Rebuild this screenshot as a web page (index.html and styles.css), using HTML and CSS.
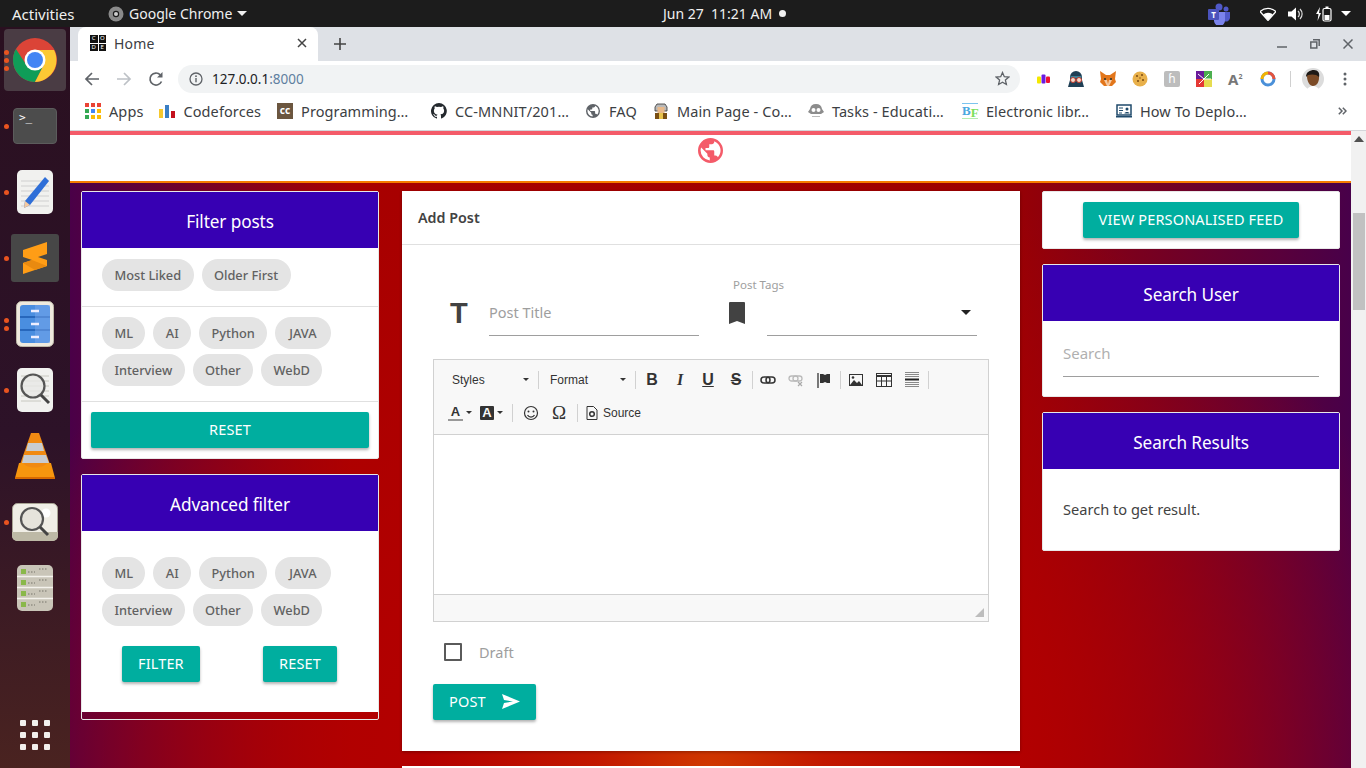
FILE: index.html
```html
<!DOCTYPE html>
<html lang="en">
<head>
  <meta charset="UTF-8">
  <title>Home</title>
  <link rel="stylesheet" href="styles.css">
</head>
<body>

  <!-- Ubuntu top bar -->
  <div class="topbar">
    <div class="top-left">
      <span class="activities">Activities</span>
      <span class="app-menu">
        <svg width="16" height="16" viewBox="0 0 16 16"><circle cx="8" cy="8" r="7.5" fill="#8a8a8a"/><circle cx="8" cy="8" r="3.2" fill="#1c1c1c"/><circle cx="8" cy="8" r="2" fill="#cfcfcf"/></svg>
        Google Chrome
        <i class="caret"></i>
      </span>
    </div>
    <div class="clock">Jun 27&nbsp; 11:21 AM <i class="clock-dot"></i></div>
    <div class="tray">
      <svg class="tray-teams" width="24" height="22" viewBox="0 0 24 22"><circle cx="12" cy="4" r="3.5" fill="#5059c9"/><circle cx="19" cy="6" r="2.5" fill="#5059c9"/><path d="M14 9h9v6a4 4 0 0 1-6 3z" fill="#5059c9"/><path d="M7 9h11v8a5 5 0 0 1-11 1z" fill="#7b83eb"/><rect x="1" y="6" width="11" height="11" rx="1" fill="#4b53bc"/><text x="6.5" y="15" class="teams-t">T</text></svg>
      <svg width="16" height="14" viewBox="0 0 16 14"><path d="M0 4.5a12 12 0 0 1 16 0L8 13.5z" fill="none" stroke="#fff" stroke-width="1.3"/><path d="M3.2 7.5a7.5 7.5 0 0 1 9.6 0L8 13z" fill="#fff"/></svg>
      <svg width="16" height="14" viewBox="0 0 16 14"><path d="M0 4.5h3.5L8 .5v13l-4.500-4H0z" fill="#fff"/><path d="M10 4a4 4 0 0 1 0 6M12 2a7 7 0 0 1 0 10" fill="none" stroke="#ddd" stroke-width="1.200"/></svg>
      <svg width="16" height="16" viewBox="0 0 16 16"><path d="M4 1 0 8h2.500L1.500 15 5 7H3z" fill="#fff"/><rect x="7" y="2.500" width="8" height="12.500" rx="1.500" fill="none" stroke="#fff" stroke-width="1.200"/><rect x="9.500" y="0.500" width="3" height="2" fill="#fff"/><rect x="8.500" y="9" width="5" height="5" fill="#fff"/></svg>
      <i class="caret tray-caret"></i>
    </div>
  </div>

  <div class="desktop">

    <!-- Launcher -->
    <nav class="dock">
      <div class="dock-item dock-active">
        <span class="pips"><i></i><i></i><i></i></span>
        <svg width="46" height="46" viewBox="0 0 46 46">
          <circle cx="23" cy="23" r="22" fill="#db4437"/>
          <path d="M3.950 12 14.300 28H31.700L23 45A22 22 0 0 1 3.950 12z" fill="#0f9d58"/>
          <path d="M23 13H42.050A22 22 0 0 1 23 45L31.700 28z" fill="#fcc934"/>
          <circle cx="23" cy="23" r="10.500" fill="#fff"/>
          <circle cx="23" cy="23" r="8" fill="#4285f4"/>
        </svg>
      </div>
      <div class="dock-item">
        <span class="pips"><i></i></span>
        <div class="term-icon">&gt;_</div>
      </div>
      <div class="dock-item">
        <span class="pips"><i></i></span>
        <svg width="38" height="46" viewBox="0 0 38 46">
          <rect x="1" y="1" width="36" height="44" rx="5" fill="#f1f1ef"/>
          <path d="M5 12h28M5 17h28M5 22h28M5 27h28M5 32h28M5 37h28" stroke="#cfcfcf"/>
          <path d="M29 8 33 12 14 36 8 39 9 32z" fill="#2f6fd8"/>
          <path d="M9 32 14 36 8 39z" fill="#f4c9a0"/>
        </svg>
      </div>
      <div class="dock-item dock-square">
        <span class="pips"><i></i></span>
        <svg width="48" height="48" viewBox="0 0 48 48">
          <rect width="48" height="48" rx="3" fill="#474747"/>
          <path d="M12 16 36 8V20L27 23 36 26V32L12 40V29L21 26 12 23z" fill="#ff9d16"/>
          <path d="M12 29 21 26 36 32 24 36z" fill="#e98a10"/>
        </svg>
      </div>
      <div class="dock-item">
        <span class="pips"><i></i><i></i></span>
        <svg width="38" height="46" viewBox="0 0 38 46">
          <rect x="0.500" y="0.500" width="37" height="45" rx="5" fill="#efeade" stroke="#bdb8a8"/>
          <rect x="4" y="4" width="30" height="38" rx="3" fill="#4a8ee0"/>
          <path d="M4 16h30M4 29h30" stroke="#1d5bb0" stroke-width="1.500"/>
          <path d="M19 4h15v38H19z" fill="#7aa8ec" opacity=".5"/>
          <path d="M15 10h8M15 23h8M15 36h8" stroke="#eef" stroke-width="2.500"/>
        </svg>
      </div>
      <div class="dock-item">
        <span class="pips"><i></i></span>
        <svg width="38" height="46" viewBox="0 0 38 46">
          <rect x="1" y="1" width="36" height="44" rx="5" fill="#f1f1ef"/>
          <path d="M5 9h28M5 14h28M5 19h28M5 24h28M5 29h28M5 34h20" stroke="#c8c8c0"/>
          <circle cx="17" cy="19" r="11.500" fill="#e9e9e6" fill-opacity=".8" stroke="#555" stroke-width="2.200"/>
          <path d="M25 28 33 36" stroke="#444" stroke-width="3"/>
        </svg>
      </div>
      <div class="dock-item">
        <svg width="42" height="46" viewBox="0 0 42 46">
          <path d="M17 0h8l13 37H4z" fill="#f08a12"/>
          <path d="M14 10h14l2 8H12zM10 22h22l3 8H8z" fill="#c8ccd0"/>
          <path d="M5 30h4c4 6 20 6 24 0h4l4 15H1z" fill="#f7960e"/>
          <path d="M1 44h40v2H1z" fill="#d96a00"/>
        </svg>
      </div>
      <div class="dock-item">
        <span class="pips"><i></i></span>
        <svg width="46" height="38" viewBox="0 0 46 38">
          <rect x="0.500" y="0.500" width="45" height="37" rx="5" fill="#f0eee6" stroke="#a8a494"/>
          <path d="M0 29h46v4a5 5 0 0 1-5 5H5a5 5 0 0 1-5-5z" fill="#bdb9a6"/>
          <circle cx="34" cy="10" r="4.500" fill="#fff"/>
          <circle cx="20" cy="16" r="11" fill="#e6e4dc" stroke="#555" stroke-width="2.200"/>
          <path d="M28 24 36 32" stroke="#444" stroke-width="3"/>
        </svg>
      </div>
      <div class="dock-item">
        <svg width="36" height="46" viewBox="0 0 36 46">
          <rect width="36" height="46" rx="5" fill="#c9c5b8"/>
          <path d="M0 11.500h36M0 22.500h36M0 33.500h36" stroke="#f4f2ec" stroke-width="1.500"/>
          <path d="M4 4h5v5H4zM4 15h5v5H4zM4 26h5v5H4zM4 37h5v5H4z" fill="#8ab84a"/>
          <path d="M11 7h7M11 18h7M11 29h7M11 40h7M22 4h9M22 15h9M22 26h9M22 37h9" stroke="#77746a" stroke-dasharray="1.500 1.500"/>
        </svg>
      </div>
      <div class="dock-spacer"></div>
      <div class="app-grid">
        <i></i><i></i><i></i><i></i><i></i><i></i><i></i><i></i><i></i>
      </div>
    </nav>

    <div class="browser">

      <!-- Tab strip -->
      <div class="tabstrip">
        <div class="tab">
          <span class="tab-favicon"><b>C</b><b>O</b><b>D</b><b>E</b></span>
          <span class="tab-title">Home</span>
          <svg class="tab-x" width="10" height="10" viewBox="0 0 10 10"><path d="M1 1l8 8M9 1l-8 8" stroke="#444" stroke-width="1.500"/></svg>
        </div>
        <svg class="new-tab" width="12" height="12" viewBox="0 0 12 12"><path d="M6 0v12M0 6h12" stroke="#444" stroke-width="1.600"/></svg>
        <div class="window-btns">
          <svg width="10" height="10" viewBox="0 0 10 10"><path d="M0 8h10" stroke="#5f6368" stroke-width="1.500"/></svg>
          <svg width="10" height="10" viewBox="0 0 10 10"><path d="M3 .8h6.200V7M.8 3h6v6h-6z" fill="none" stroke="#5f6368" stroke-width="1.500"/></svg>
          <svg width="10" height="10" viewBox="0 0 10 10"><path d="M.5.5l9 9M9.500.5l-9 9" stroke="#5f6368" stroke-width="1.500"/></svg>
        </div>
      </div>

      <!-- Toolbar -->
      <div class="toolbar">
        <svg class="nav-ico" width="16" height="16" viewBox="0 0 16 16"><path d="M15 8H2M8 2 2 8l6 6" fill="none" stroke="#5f6368" stroke-width="1.700"/></svg>
        <svg class="nav-ico" width="16" height="16" viewBox="0 0 16 16"><path d="M1 8h13M8 2l6 6-6 6" fill="none" stroke="#bdc1c6" stroke-width="1.700"/></svg>
        <svg class="nav-ico" width="16" height="16" viewBox="0 0 16 16"><path d="M13.500 10.500A6 6 0 1 1 12.300 3.800" fill="none" stroke="#5f6368" stroke-width="1.700"/><path d="M14.500 1v5.500H9z" fill="#5f6368"/></svg>
        <div class="omnibox">
          <svg width="14" height="14" viewBox="0 0 14 14"><circle cx="7" cy="7" r="6" fill="none" stroke="#5f6368" stroke-width="1.300"/><path d="M7 6v4.200" stroke="#5f6368" stroke-width="1.400"/><circle cx="7" cy="4.200" r=".9" fill="#5f6368"/></svg>
          <span class="url">127.0.0.1<span class="url-port">:8000</span></span>
          <svg class="star" width="15" height="15" viewBox="0 0 15 15"><path d="M7.500 1.500 9.300 5.700l4.500.4-3.400 3 1 4.400-3.900-2.300-3.900 2.300 1-4.400-3.400-3 4.500-.4z" fill="none" stroke="#5f6368" stroke-width="1.300"/></svg>
        </div>
        <div class="extensions">
          <svg width="16" height="16" viewBox="0 0 16 16"><rect x="1" y="5.500" width="4" height="7" rx="1" fill="#f4e800"/><rect x="5.500" y="3.500" width="4" height="9" rx="1" fill="#6a1be0"/><rect x="10" y="5.500" width="4" height="6.500" rx="1" fill="#f01030"/></svg>
          <svg width="16" height="16" viewBox="0 0 16 16"><path d="M8 0a6 6 0 0 1 6 6v3l2 7H0l2-7V6a6 6 0 0 1 6-6z" fill="#1f3f55"/><path d="M2.500 5h11v2h-11z" fill="#3d7f96"/><circle cx="5" cy="9" r="2.500" fill="#f3d9c9" stroke="#c0392b"/><circle cx="11" cy="9" r="2.500" fill="#f3d9c9" stroke="#c0392b"/></svg>
          <svg width="16" height="16" viewBox="0 0 16 16"><path d="M0 0l6 4h4l6-4-1 8 1 3-4 4H4l-4-4 1-3z" fill="#e2761b"/><path d="M4 9h3l1 4 1-4h3l-3 6H7z" fill="#f6c9a0"/><circle cx="5" cy="8" r="1" fill="#233"/><circle cx="11" cy="8" r="1" fill="#233"/></svg>
          <svg width="16" height="16" viewBox="0 0 16 16"><circle cx="8" cy="8" r="7.500" fill="#e8b04a"/><g fill="#7a4a12"><circle cx="5" cy="5" r="1"/><circle cx="10" cy="4" r="1"/><circle cx="11" cy="9" r="1"/><circle cx="6" cy="10" r="1"/><circle cx="8" cy="7" r=".7"/></g></svg>
          <span class="ext-h">ɦ</span>
          <svg width="16" height="16" viewBox="0 0 16 16"><rect width="8" height="8" fill="#6a1b9a"/><rect x="8" width="8" height="8" fill="#4caf50"/><rect y="8" width="8" height="8" fill="#e53935"/><rect x="8" y="8" width="8" height="8" fill="#e6dc50"/><path d="M8 8 2 3M8 8l5-5M8 8l-5 5M8 8h7" stroke="#fff"/></svg>
          <span class="ext-a">A<sup>2</sup></span>
          <svg width="16" height="16" viewBox="0 0 16 16"><circle cx="8" cy="8" r="6" fill="none" stroke="#4a90d9" stroke-width="3"/><path d="M8 2a6 6 0 0 1 6 6" fill="none" stroke="#e5533d" stroke-width="3"/><path d="M2 8a6 6 0 0 1 6-6" fill="none" stroke="#f4b400" stroke-width="3"/></svg>
        </div>
        <div class="toolbar-sep"></div>
        <svg class="avatar" width="22" height="22" viewBox="0 0 22 22"><circle cx="11" cy="11" r="11" fill="#dcdcdc"/><path d="M5 8c0-4 3-5 6-5s7 1 6 7c0 5-3 8-6 8s-6-4-6-10z" fill="#7b4a26"/><path d="M4 9c0-5 4-7 8-7s6 3 5 7c-2-3-8-3-11-2z" fill="#1e1a17"/><path d="M5 22c1-3 4-4 6-4s5 1 6 4z" fill="#fff"/></svg>
        <svg class="kebab" width="4" height="14" viewBox="0 0 4 14"><circle cx="2" cy="2" r="1.500" fill="#5f6368"/><circle cx="2" cy="7" r="1.500" fill="#5f6368"/><circle cx="2" cy="12" r="1.500" fill="#5f6368"/></svg>
      </div>

      <!-- Bookmarks -->
      <div class="bookmarks">
        <div class="bm">
          <span class="apps-ico"><i class="r"></i><i class="r"></i><i class="r"></i><i class="g"></i><i class="b"></i><i class="y"></i><i class="g"></i><i class="y"></i><i class="y"></i></span>
          Apps
        </div>
        <div class="bm">
          <svg width="16" height="16" viewBox="0 0 16 16"><rect y="6" width="4" height="9" fill="#f6c82e"/><rect x="6" y="2" width="4" height="13" fill="#3b7fc4"/><rect x="12" y="8" width="4" height="7" fill="#c4101c"/></svg>
          Codeforces
        </div>
        <div class="bm bm-fixed">
          <span class="cc-ico">cc</span>
          Programming…
        </div>
        <div class="bm bm-fixed">
          <svg width="16" height="16" viewBox="0 0 16 16"><path fill="#24292e" d="M8 0a8 8 0 0 0-2.500 15.600c.4.100.5-.2.500-.4v-1.400c-2.200.5-2.700-1-2.700-1-.4-.9-.9-1.200-.9-1.200-.7-.5.100-.5.100-.5.800.1 1.200.8 1.200.8.700 1.200 1.900.9 2.300.7.100-.5.300-.9.500-1.100-1.800-.2-3.600-.9-3.600-4 0-.9.300-1.600.8-2.100-.1-.2-.4-1 .1-2.100 0 0 .7-.2 2.200.8a7.500 7.500 0 0 1 4 0c1.500-1 2.200-.8 2.200-.8.400 1.100.2 1.900.1 2.100.5.600.8 1.300.8 2.100 0 3.100-1.900 3.700-3.700 3.900.3.300.6.800.6 1.500v2.200c0 .2.100.5.600.4A8 8 0 0 0 8 0z"/></svg>
          CC-MNNIT/201…
        </div>
        <div class="bm bm-faq">
          <span class="bm-ico-box">
            <svg width="14" height="14" viewBox="0 0 24 24"><path fill="#5f6368" d="M12 0a12 12 0 1 0 0 24 12 12 0 0 0 0-24zM2.500 12c0-1 .2-2 .5-2.900L9 15v1.200c0 1.300 1 2.400 2.300 2.400v2.900A9.600 9.600 0 0 1 2.500 12zm16.600 6.400a2.400 2.400 0 0 0-2.300-1.700h-1.200V13c0-.7-.5-1.200-1.200-1.200H7.200V9.500h2.400c.7 0 1.200-.5 1.200-1.200V5.900h2.400c1.300 0 2.400-1.100 2.400-2.400v-.5a9.600 9.600 0 0 1 3.500 15.400z"/></svg>
          </span>
          FAQ
        </div>
        <div class="bm bm-fixed">
          <span class="bm-ico-box">
            <svg width="14" height="16" viewBox="0 0 14 16"><path d="M3 1h8l2 3v4H1V4z" fill="#b9b9b9" stroke="#333" stroke-width=".8"/><rect x="3.500" y="4" width="7" height="6" fill="#e9b98a"/><path d="M1 10h12v6H1z" fill="#7a4f14"/><path d="M5 10h4v6H5z" fill="#e8c34c"/></svg>
          </span>
          Main Page - Co…
        </div>
        <div class="bm bm-fixed">
          <svg width="16" height="16" viewBox="0 0 16 16"><path d="M8 1a6 6 0 0 1 6 5l2 3-3 2H3L0 9l2-3a6 6 0 0 1 6-5z" fill="#8c8c8c"/><circle cx="5.500" cy="7" r="2" fill="#fff"/><circle cx="10.500" cy="7" r="2" fill="#fff"/><path d="M4 13h8v1H4z" fill="#bbb"/></svg>
          Tasks - Educati…
        </div>
        <div class="bm bm-fixed">
          <span class="bf-ico"><b class="bf-b">B</b><b class="bf-f">F</b></span>
          Electronic libr…
        </div>
        <div class="bm">
          <svg width="16" height="14" viewBox="0 0 16 14"><rect x="1" y="1" width="14" height="10" fill="#fff" stroke="#1f4a6b" stroke-width="1.500"/><path d="M3 4h4M3 6.500h4M3 9h3" stroke="#1f4a6b"/><circle cx="11" cy="5" r="1.500" fill="#1f4a6b"/><path d="M8.500 9.500c0-2 5-2 5 0z" fill="#1f4a6b"/><path d="M0 12h16v1.500H0z" fill="#1f4a6b"/></svg>
          How To Deplo…
        </div>
        <svg class="bm-more" width="9" height="8" viewBox="0 0 9 8"><path d="M.8.800 4 4 .8 7.200M4.800.8 8 4 4.800 7.200" fill="none" stroke="#5f6368" stroke-width="1.500"/></svg>
      </div>

      <div class="viewport">
        <div class="page">

          <!-- Site navbar -->
          <div class="site-nav">
            <svg width="25" height="25" viewBox="0 0 24 24"><path fill="#f45b69" d="M12 0a12 12 0 1 0 0 24 12 12 0 0 0 0-24zM2.500 12c0-1 .2-2 .5-2.900L9 15v1.200c0 1.300 1 2.400 2.300 2.400v2.900A9.600 9.600 0 0 1 2.500 12zm16.600 6.400a2.400 2.400 0 0 0-2.300-1.700h-1.200V13c0-.7-.5-1.200-1.200-1.200H7.200V9.500h2.400c.7 0 1.200-.5 1.200-1.200V5.900h2.400c1.300 0 2.400-1.100 2.400-2.400v-.5a9.600 9.600 0 0 1 3.500 15.400z"/></svg>
          </div>

          <div class="columns">

            <!-- Left column -->
            <aside class="col-side">
              <section class="card">
                <h3 class="card-head">Filter posts</h3>
                <div class="chip-row chip-row-first">
                  <span class="chip">Most Liked</span>
                  <span class="chip">Older First</span>
                </div>
                <div class="chip-row">
                  <span class="chip">ML</span>
                  <span class="chip">AI</span>
                  <span class="chip">Python</span>
                  <span class="chip chip-java">JAVA</span>
                  <span class="chip">Interview</span>
                  <span class="chip">Other</span>
                  <span class="chip">WebD</span>
                </div>
                <div class="reset-wrap">
                  <button class="btn btn-block">RESET</button>
                </div>
              </section>

              <section class="card card-advanced">
                <div class="card-advanced-body">
                  <h3 class="card-head">Advanced filter</h3>
                  <div class="chip-row chip-row-plain">
                    <span class="chip">ML</span>
                    <span class="chip">AI</span>
                    <span class="chip">Python</span>
                    <span class="chip chip-java">JAVA</span>
                    <span class="chip">Interview</span>
                    <span class="chip">Other</span>
                    <span class="chip">WebD</span>
                  </div>
                  <div class="adv-actions">
                    <button class="btn">FILTER</button>
                    <button class="btn">RESET</button>
                  </div>
                </div>
              </section>
            </aside>

            <!-- Centre column -->
            <main class="col-main">
              <section class="post-card">
                <div class="post-title">Add Post</div>
                <div class="post-body">
                  <div class="post-fields">
                    <div class="field field-title">
                      <span class="t-ico">T</span>
                      <span class="field-line">Post Title</span>
                    </div>
                    <div class="field field-tags">
                      <svg class="bookmark" width="18" height="22" viewBox="0 0 18 22"><path d="M2 0h14a1 1 0 0 1 1 1v21l-8-3-8 3V1a1 1 0 0 1 1-1z" fill="#424242"/></svg>
                      <div class="tags-wrap">
                        <span class="tags-label">Post Tags</span>
                        <span class="field-line tags-line"><i class="select-caret"></i></span>
                      </div>
                    </div>
                  </div>

                  <!-- CKEditor style box -->
                  <div class="editor">
                    <div class="editor-tools">
                      <div class="tool-row">
                        <span class="combo combo-styles">Styles<i class="mini-caret"></i></span>
                        <i class="tool-sep"></i>
                        <span class="combo combo-format">Format<i class="mini-caret"></i></span>
                        <i class="tool-sep sep-b"></i>
                        <span class="tool tool-text tb">B</span>
                        <span class="tool tool-text ti">I</span>
                        <span class="tool tool-text tu">U</span>
                        <span class="tool tool-text ts">S</span>
                        <i class="tool-sep sep-t"></i>
                        <svg class="tool" width="16" height="16" viewBox="0 0 16 16"><rect x="1" y="5" width="9" height="6" rx="3" fill="none" stroke="#333" stroke-width="1.500"/><rect x="6" y="5" width="9" height="6" rx="3" fill="none" stroke="#333" stroke-width="1.500"/></svg>
                        <svg class="tool" width="16" height="16" viewBox="0 0 16 16"><rect x="1" y="4" width="9" height="5" rx="2.500" fill="none" stroke="#bbb" stroke-width="1.300"/><rect x="5" y="4" width="9" height="5" rx="2.500" fill="none" stroke="#bbb" stroke-width="1.300"/><path d="M10 10l4 4M14 10l-4 4" stroke="#aaa" stroke-width="1.200"/></svg>
                        <svg class="tool" width="16" height="16" viewBox="0 0 16 16"><path d="M2 1v15" stroke="#333" stroke-width="1.300"/><path d="M4 2h3l2 1 2-1h3v9h-3l-2-1-2 1H4z" fill="#333"/></svg>
                        <i class="tool-sep sep-t"></i>
                        <svg class="tool" width="16" height="16" viewBox="0 0 16 16"><rect x="1.500" y="2.500" width="13" height="11" fill="none" stroke="#333"/><path d="M2 13l4-5 3 3 2-2 3 4z" fill="#333"/><circle cx="5" cy="5.500" r="1.300" fill="#333"/></svg>
                        <svg class="tool" width="16" height="16" viewBox="0 0 16 16"><rect x=".5" y="1.500" width="15" height="13" fill="none" stroke="#333"/><path d="M.5 3h15v2h-15z" fill="#333"/><path d="M.5 9h15M5.500 4v10M10.500 4v10" stroke="#333"/></svg>
                        <svg class="tool" width="16" height="16" viewBox="0 0 16 16"><path d="M1 .5h14M1 2.500h14M1 4.500h14M1 10.500h14M1 12.500h14M1 14.500h14" stroke="#8a8a8a"/><path d="M1 7.500h14" stroke="#222" stroke-width="2"/></svg>
                        <i class="tool-sep sep-t"></i>
                      </div>
                      <div class="tool-row">
                        <span class="tool-a"><span class="a-under">A</span><i class="mini-caret"></i></span>
                        <span class="tool-a"><span class="a-box">A</span><i class="mini-caret"></i></span>
                        <i class="tool-sep"></i>
                        <svg class="tool" width="16" height="16" viewBox="0 0 16 16"><circle cx="8" cy="8" r="6.500" fill="none" stroke="#333" stroke-width="1.200"/><circle cx="5.500" cy="6.500" r="1" fill="#333"/><circle cx="10.500" cy="6.500" r="1" fill="#333"/><path d="M4.500 10a4 4 0 0 0 7 0" fill="none" stroke="#333" stroke-width="1.200"/></svg>
                        <span class="tool tool-text tomega">Ω</span>
                        <i class="tool-sep"></i>
                        <span class="source">
                          <svg width="12" height="14" viewBox="0 0 12 14"><path d="M1 .5h6.500L11 4v9.500H1z" fill="none" stroke="#333"/><circle cx="6" cy="8" r="2.300" fill="none" stroke="#333" stroke-width="1.500"/></svg>
                          Source
                        </span>
                      </div>
                    </div>
                    <div class="editor-area"></div>
                    <div class="editor-foot"><i class="resize-grip"></i></div>
                  </div>

                  <label class="draft"><i class="checkbox"></i><span>Draft</span></label>

                  <button class="btn btn-post">POST
                    <svg width="18" height="15" viewBox="0 0 18 15"><path d="M0 0l18 7.500L0 15l2-6 9-1.500L2 6z" fill="#fff"/></svg>
                  </button>
                </div>
              </section>
              <div class="post-card-next"></div>
            </main>

            <!-- Right column -->
            <aside class="col-side">
              <section class="card card-feed">
                <button class="btn">VIEW PERSONALISED FEED</button>
              </section>
              <section class="card">
                <h3 class="card-head">Search User</h3>
                <div class="search-box"><span class="search-line">Search</span></div>
              </section>
              <section class="card">
                <h3 class="card-head">Search Results</h3>
                <p class="result-text">Search to get result.</p>
              </section>
            </aside>

          </div>
        </div>

        <div class="scrollbar">
          <svg width="10" height="6" viewBox="0 0 10 6"><path d="M5 0l5 6H0z" fill="#505050"/></svg>
          <div class="scroll-thumb"></div>
        </div>
      </div>
    </div>
  </div>

</body>
</html>
```

FILE: styles.css
```css
* {
  box-sizing: border-box;
}

body {
  margin: 0;
  width: 1366px;
  height: 768px;
  overflow: hidden;
  display: flex;
  flex-direction: column;
  font-family: "Noto Sans", sans-serif;
  color: #424242;
}

i {
  display: block;
}

/* top bar */
.topbar {
  height: 27px;
  flex-shrink: 0;
  background: #1c1c1c;
  color: #f0f0f0;
  font-size: 14px;
  display: grid;
  grid-template-columns: 663px auto 1fr;
  align-items: center;
}

.top-left {
  display: flex;
  align-items: center;
  padding-left: 12px;
}

.activities {
  width: 96px;
  font-size: 15px;
}

.app-menu {
  display: flex;
  align-items: center;
  gap: 5px;
}

.caret {
  width: 0;
  height: 0;
  border-left: 5px solid transparent;
  border-right: 5px solid transparent;
  border-top: 5px solid #f0f0f0;
}

.clock {
  display: flex;
  align-items: center;
  gap: 3px;
  font-size: 14px;
  white-space: pre;
}

.clock-dot {
  width: 7px;
  height: 7px;
  border-radius: 50%;
  background: #f0f0f0;
}

.tray {
  display: flex;
  align-items: center;
  justify-content: flex-end;
  gap: 12px;
  padding-right: 15px;
}

.tray-teams {
  margin-right: 17px;
}

.teams-t {
  font-size: 8px;
  fill: #fff;
  text-anchor: middle;
  font-weight: 700;
}

.tray-caret {
  margin-left: -3px;
  border-top-color: #fff;
}

.desktop {
  flex: 1;
  display: flex;
  min-height: 0;
}

/* launcher */
.dock {
  width: 70px;
  flex-shrink: 0;
  background: linear-gradient(to bottom, #2a1020 0%, #2d1228 55%, #4a2320 100%);
  display: flex;
  flex-direction: column;
  align-items: center;
  padding-top: 2px;
}

.dock-item {
  position: relative;
  width: 62px;
  height: 62px;
  margin-bottom: 4px;
  display: flex;
  align-items: center;
  justify-content: center;
  border-radius: 4px;
}

.dock-active {
  background: #4a3c44;
}

.pips {
  position: absolute;
  left: 0;
  top: 0;
  bottom: 0;
  display: flex;
  flex-direction: column;
  justify-content: center;
  gap: 3px;
}

.pips i {
  width: 5px;
  height: 5px;
  border-radius: 50%;
  background: #e95420;
}

.term-icon {
  width: 44px;
  height: 36px;
  background: #4c4c4c;
  border: 1px solid #5c5c5c;
  border-radius: 4px;
  color: #fff;
  font-family: "DejaVu Sans Mono", monospace;
  font-size: 11px;
  line-height: 14px;
  padding: 2px 5px;
}

.dock-spacer {
  flex: 1;
}

.app-grid {
  display: grid;
  grid-template-columns: repeat(3, 6px);
  gap: 6px;
  margin-bottom: 18px;
}

.app-grid i {
  width: 6px;
  height: 6px;
  background: #f2f0ee;
  border-radius: 1px;
}

/* chrome */
.browser {
  flex: 1;
  min-width: 0;
  display: flex;
  flex-direction: column;
}

.tabstrip {
  height: 34px;
  flex-shrink: 0;
  background: #dee1e6;
  display: flex;
  align-items: center;
  padding-left: 8px;
}

.tab {
  width: 240px;
  height: 34px;
  background: #fff;
  border-radius: 8px 8px 0 0;
  display: flex;
  align-items: center;
  padding: 0 0 2px 12px;
  font-size: 13px;
  color: #3c4043;
}

.tab-favicon {
  width: 16px;
  height: 16px;
  display: grid;
  grid-template-columns: 1fr 1fr;
  gap: 1px;
  margin-right: 8px;
  flex-shrink: 0;
}

.tab-favicon b {
  background: #111;
  color: #fff;
  font-size: 6px;
  font-weight: 400;
  line-height: 7.5px;
  text-align: center;
}

.tab-title {
  flex: 1;
  font-size: 14px;
  letter-spacing: 0.2px;
}

.tab-x {
  margin-right: 11px;
}

.new-tab {
  margin-left: 16px;
}

.window-btns {
  margin-left: auto;
  display: flex;
  align-items: center;
  gap: 23px;
  padding-right: 13px;
}

.toolbar {
  height: 35px;
  flex-shrink: 0;
  background: #fff;
  display: flex;
  align-items: center;
  padding-left: 14px;
}

.nav-ico {
  margin-right: 16px;
  flex-shrink: 0;
}

.omnibox {
  width: 842px;
  height: 28px;
  flex-shrink: 0;
  margin-left: -2px;
  background: #f1f3f4;
  border-radius: 14px;
  display: flex;
  align-items: center;
  padding: 0 10px 0 11px;
}

.url {
  flex: 1;
  margin-left: 9px;
  color: #202124;
  font-size: 13.5px;
}

.url-port {
  color: #5f7f9f;
}

.extensions {
  display: flex;
  align-items: center;
  gap: 16px;
  margin-left: 16px;
  flex-shrink: 0;
}

.ext-h {
  width: 16px;
  height: 16px;
  background: #bdbdbd;
  border-radius: 2px;
  color: #fff;
  font-size: 12px;
  line-height: 16px;
  text-align: center;
}

.ext-a {
  width: 16px;
  font-size: 15px;
  font-weight: 700;
  line-height: 16px;
  color: #777;
}

.ext-a sup {
  font-size: 7px;
  line-height: 0;
}

.toolbar-sep {
  width: 1px;
  height: 16px;
  flex-shrink: 0;
  background: #d0d0d0;
  margin-left: 14px;
}

.avatar {
  margin-left: 11px;
  flex-shrink: 0;
}

.kebab {
  margin-left: 19px;
  flex-shrink: 0;
}

.bookmarks {
  height: 35px;
  flex-shrink: 0;
  background: #fff;
  border-bottom: 1px solid #d4d6da;
  display: flex;
  align-items: center;
  padding: 0 0 5px 15px;
  font-size: 14.5px;
  color: #3c4043;
}

.bm {
  display: flex;
  align-items: center;
  gap: 8px;
  margin-right: 16px;
  white-space: nowrap;
  letter-spacing: 0.1px;
}

.bm-fixed {
  width: 138px;
}

.bm-faq {
  margin-right: 17px;
}

.bm-ico-box {
  width: 16px;
  display: flex;
  justify-content: center;
}

.apps-ico {
  display: grid;
  grid-template-columns: repeat(3, 4px);
  gap: 2px;
}

.apps-ico i {
  width: 4px;
  height: 4px;
}

.apps-ico .r { background: #ea4335; }
.apps-ico .g { background: #34a853; }
.apps-ico .b { background: #4285f4; }
.apps-ico .y { background: #fbbc05; }

.cc-ico {
  width: 16px;
  height: 16px;
  background: #6b563f;
  color: #fff;
  font-size: 10px;
  font-weight: 700;
  line-height: 15px;
  text-align: center;
}

.bf-ico {
  width: 16px;
  height: 16px;
  display: flex;
  font-family: "Liberation Serif", serif;
  font-size: 13px;
  line-height: 14px;
  border-top: 1px solid #7cc4ee;
  border-bottom: 1px solid #b6ecb0;
}

.bf-b {
  color: #4aa8e0;
}

.bf-f {
  color: #7be05a;
  margin-top: 2px;
}

.bm-more {
  margin-left: auto;
  margin-right: 19px;
}

/* page */
.viewport {
  flex: 1;
  min-height: 0;
  display: flex;
}

.page {
  flex: 1;
  min-width: 0;
  overflow: hidden;
  background:
    radial-gradient(ellipse 760px 620px at 640px 640px, #d03a00 0%, #c21800 15%, #b30000 38%, rgba(160, 0, 0, 0) 100%),
    linear-gradient(to right, #4a0048 0%, #a80000 22%, #9c0000 72%, #48004a 100%);
}

.site-nav {
  height: 52px;
  background: #fff;
  border-top: 4px solid #f45b69;
  border-bottom: 2px solid #f57c00;
  display: flex;
  justify-content: center;
  padding-top: 3px;
}

.columns {
  display: flex;
  align-items: flex-start;
  gap: 22px;
  padding: 8px 0 0 11px;
}

.col-side {
  width: 298px;
  flex-shrink: 0;
  display: flex;
  flex-direction: column;
  gap: 15px;
}

.col-main {
  width: 618px;
  flex-shrink: 0;
  margin-left: 1px;
}

.card {
  background: #fff;
  border: 1px solid #e8e8e8;
  border-radius: 2px;
}

.card-head {
  height: 56px;
  margin: 0;
  padding-top: 3px;
  background: #3700b3;
  color: #fff;
  font-size: 17.2px;
  font-weight: 400;
  letter-spacing: -0.1px;
  display: flex;
  align-items: center;
  justify-content: center;
}

.chip-row {
  display: flex;
  flex-wrap: wrap;
  gap: 5px 8px;
  padding: 10px 20px 15px;
  border-bottom: 1px solid #e0e0e0;
}

.chip-row-first {
  padding-top: 11px;
}

.chip-row-plain {
  border-bottom: none;
  padding: 26px 20px 20px;
}

.chip {
  height: 32px;
  padding: 0 12.4px;
  border-radius: 16px;
  background: #e4e4e4;
  color: #616161;
  font-size: 12.8px;
  font-weight: 500;
  display: flex;
  align-items: center;
}

.chip-java {
  padding: 0 14px;
}

.reset-wrap {
  padding: 10px 9px;
}

.btn {
  height: 36px;
  padding: 0 16px 2px;
  border: none;
  border-radius: 2px;
  background: #00ae9f;
  color: #fff;
  font-family: inherit;
  font-size: 14.5px;
  letter-spacing: 0.15px;
  box-shadow: 0 2px 3px rgba(0, 0, 0, 0.3);
}

.btn-block {
  width: 100%;
}

.card-advanced {
  height: 246px;
  background: transparent;
}

.card-advanced-body {
  height: 237px;
  background: #fff;
}

.adv-actions {
  display: flex;
  justify-content: space-between;
  padding: 0 41px 0 40px;
}

.post-card {
  height: 560px;
  background: #fff;
  box-shadow: 0 1px 3px rgba(0, 0, 0, 0.3);
}

.post-card-next {
  height: 20px;
  margin-top: 15px;
  background: #fff;
}

.post-title {
  height: 54px;
  padding-left: 16px;
  border-bottom: 1px solid #e0e0e0;
  font-size: 14.3px;
  font-weight: 600;
  display: flex;
  align-items: center;
}

.post-body {
  padding: 32px 31px 0;
}

.post-fields {
  display: flex;
  gap: 28px;
  height: 82px;
  padding-left: 16px;
}

.field {
  display: flex;
  align-items: flex-end;
  height: 59px;
}

.field-title {
  gap: 18px;
}

.t-ico {
  width: 22px;
  height: 37px;
  padding-left: 1px;
  font-family: "Liberation Sans", sans-serif;
  font-size: 29px;
  font-weight: 700;
  line-height: 28px;
  color: #424242;
}

.field-line {
  display: flex;
  align-items: center;
  justify-content: space-between;
  width: 210px;
  height: 47px;
  border-bottom: 1px solid #9e9e9e;
  color: #9e9e9e;
  font-size: 14.5px;
}

.bookmark {
  margin: 0 0 12px 1px;
}

.field-tags {
  gap: 21px;
}

.tags-wrap {
  display: flex;
  flex-direction: column;
}

.tags-label {
  font-size: 11.5px;
  color: #9e9e9e;
  margin: 2px 0 -2px -34px;
  line-height: 12px;
}

.tags-line {
  justify-content: flex-end;
  padding-right: 6px;
}

.select-caret {
  width: 0;
  height: 0;
  border-left: 5.5px solid transparent;
  border-right: 5.5px solid transparent;
  border-top: 5.5px solid #222;
}

.editor {
  width: 556px;
  height: 263px;
  border: 1px solid #d1d1d1;
  display: flex;
  flex-direction: column;
}

.editor-tools {
  height: 75px;
  flex-shrink: 0;
  background: #f8f8f8;
  border-bottom: 1px solid #d1d1d1;
  padding: 3px 7px;
}

.tool-row {
  display: flex;
  align-items: center;
  height: 33px;
  font-family: "Liberation Sans", sans-serif;
  font-size: 12px;
  color: #333;
}

.combo {
  display: flex;
  align-items: center;
  justify-content: space-between;
}

.combo-styles {
  width: 93px;
  padding: 0 5px 0 11px;
}

.combo-format {
  width: 88px;
  padding: 0 5px 0 7px;
}

.mini-caret {
  width: 0;
  height: 0;
  border-left: 3px solid transparent;
  border-right: 3px solid transparent;
  border-top: 3px solid #333;
}

.tool-sep {
  width: 1px;
  height: 18px;
  background: #d1d1d1;
  margin: 0 4px;
  flex-shrink: 0;
}

.sep-b {
  margin: 0 2px 0 4px;
}

.sep-t {
  margin: 0 1px 0 2px;
}

.tool {
  width: 16px;
  margin: 0 6px;
  flex-shrink: 0;
}

.tool-text {
  font-size: 16px;
  line-height: 16px;
  text-align: center;
  color: #333;
}

.tb {
  font-weight: 700;
}

.ti {
  font-family: "Liberation Serif", serif;
  font-weight: 700;
  font-style: italic;
}

.tu {
  font-weight: 700;
  text-decoration: underline;
}

.ts {
  font-weight: 700;
  text-decoration: line-through;
}

.tomega {
  font-family: "Liberation Serif", serif;
  font-size: 19px;
}

.tool-a {
  display: flex;
  align-items: center;
  gap: 3px;
  margin: 0 5px 0 3px;
  font-size: 13px;
  font-weight: 700;
}

.tool-a:first-child {
  margin-left: 7px;
}

.a-under {
  width: 15px;
  text-align: center;
  line-height: 14px;
  border-bottom: 2px solid #999;
}

.a-box {
  width: 14px;
  height: 14px;
  background: #333;
  color: #f8f8f8;
  line-height: 14px;
  text-align: center;
  border-radius: 1px;
}

.source {
  display: flex;
  align-items: center;
  gap: 5px;
  margin-left: 4px;
}

.editor-area {
  flex: 1;
  background: #fff;
}

.editor-foot {
  height: 27px;
  flex-shrink: 0;
  background: #f8f8f8;
  border-top: 1px solid #d1d1d1;
  display: flex;
  justify-content: flex-end;
  align-items: flex-end;
  padding: 0 4px 4px 0;
}

.resize-grip {
  width: 0;
  height: 0;
  border-left: 9px solid transparent;
  border-bottom: 9px solid #bdbdbd;
}

.draft {
  display: flex;
  align-items: center;
  gap: 17px;
  height: 18px;
  margin: 21px 0 0 11px;
  color: #9e9e9e;
  font-size: 14.5px;
}

.checkbox {
  width: 18px;
  height: 18px;
  border: 2px solid #5a5a5a;
  border-radius: 1px;
}

.btn-post {
  display: flex;
  align-items: center;
  gap: 16px;
  margin-top: 23px;
  width: 103px;
}

.card-feed {
  height: 58px;
  display: flex;
  align-items: flex-start;
  justify-content: center;
  padding-top: 10px;
}

.search-box {
  height: 75px;
  padding: 0 20px;
}

.search-line {
  display: flex;
  align-items: center;
  height: 56px;
  padding-top: 8px;
  border-bottom: 1px solid #9e9e9e;
  color: #b0b0b0;
  font-size: 15px;
}

.result-text {
  height: 81px;
  margin: 0;
  padding: 30px 20px 0;
  font-size: 14.6px;
  color: #424242;
}

.scrollbar {
  width: 15px;
  flex-shrink: 0;
  background: #f1f1f1;
  display: flex;
  flex-direction: column;
  align-items: center;
  padding-top: 5px;
}

.scroll-thumb {
  width: 12px;
  height: 97px;
  margin-top: 71px;
  background: #c1c1c1;
}
```
